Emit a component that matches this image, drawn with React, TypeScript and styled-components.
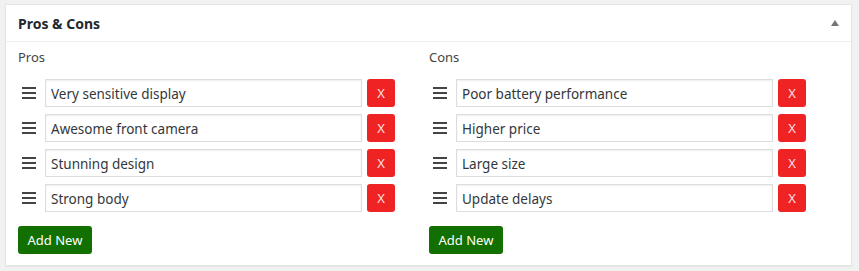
import styled, { createGlobalStyle } from 'styled-components';

const GlobalStyle = createGlobalStyle`
  html, body {
    margin: 0;
    padding: 0;
    background: #f1f1f1;
  }
  body {
    font-family: "Noto Sans", "Open Sans", sans-serif;
    color: #444444;
  }
`;

const prosItems = ['Very sensitive display', 'Awesome front camera', 'Stunning design', 'Strong body'];
const consItems = ['Poor battery performance', 'Higher price', 'Large size', 'Update delays'];

const Page = styled.div`
  padding: 4px 7px 5px 5px;
`;

const Panel = styled.div`
  background: #ffffff;
  border: 1px solid #e5e5e5;
  box-shadow: 0 1px 1px rgba(0, 0, 0, 0.04);
`;

const Header = styled.div`
  height: 36px;
  display: flex;
  align-items: center;
  justify-content: space-between;
  padding: 0 12px;
  border-bottom: 1px solid #eeeeee;
`;

const Title = styled.h2`
  margin: 0;
  font-size: 14px;
  font-weight: 700;
  color: #23282d;
`;

const Toggle = styled.span`
  width: 0;
  height: 0;
  border-left: 4px solid transparent;
  border-right: 4px solid transparent;
  border-bottom: 6px solid #72777c;
`;

const Body = styled.div`
  display: grid;
  grid-template-columns: 411px 1fr;
  padding: 6px 12px 11px;
`;

const Column = styled.div`
  display: flex;
  flex-direction: column;
`;

const Label = styled.div`
  font-size: 13px;
  line-height: 18px;
  color: #444444;
  margin-bottom: 13px;
`;

const List = styled.div`
  display: flex;
  flex-direction: column;
  gap: 7px;
  margin-bottom: 14px;
`;

const Row = styled.div`
  display: flex;
  align-items: center;
  height: 28px;
`;

const Handle = styled.svg`
  width: 14px;
  height: 12px;
  margin: 0 9px 0 4px;
  flex: none;
  cursor: move;
`;

const TextInput = styled.input`
  box-sizing: border-box;
  width: 317px;
  height: 28px;
  margin: 0;
  padding: 2px 5px 0;
  border: 1px solid #dddddd;
  box-shadow: inset 0 1px 2px rgba(0, 0, 0, 0.07);
  font-family: inherit;
  font-size: 13.5px;
  color: #32373c;
  outline: none;
`;

const RemoveButton = styled.button`
  width: 28px;
  height: 28px;
  margin-left: 5px;
  padding: 0;
  border: none;
  border-radius: 3px;
  background: #ef2323;
  color: #fde0e0;
  font-family: inherit;
  font-size: 13px;
  cursor: pointer;
`;

const AddButton = styled.button`
  align-self: flex-start;
  height: 28px;
  width: 74px;
  padding: 0;
  border: none;
  border-radius: 3px;
  background: #127000;
  color: #ffffff;
  font-family: inherit;
  font-size: 13px;
  cursor: pointer;
`;

const MenuIcon = () => (
  <Handle viewBox="0 0 14 12">
    <rect x="0" y="0" width="14" height="2" fill="#444" />
    <rect x="0" y="5" width="14" height="2" fill="#444" />
    <rect x="0" y="10" width="14" height="2" fill="#444" />
  </Handle>
);

const ItemList = ({ label, items }: { label: string; items: string[] }) => (
  <Column>
    <Label>{label}</Label>
    <List>
      {items.map((item) => (
        <Row key={item}>
          <MenuIcon />
          <TextInput defaultValue={item} />
          <RemoveButton type="button">X</RemoveButton>
        </Row>
      ))}
    </List>
    <AddButton type="button">Add New</AddButton>
  </Column>
);

const App = () => (
  <>
    <GlobalStyle />
    <Page>
      <Panel>
        <Header>
          <Title>Pros &amp; Cons</Title>
          <Toggle />
        </Header>
        <Body>
          <ItemList label="Pros" items={prosItems} />
          <ItemList label="Cons" items={consItems} />
        </Body>
      </Panel>
    </Page>
  </>
);

export default App;
